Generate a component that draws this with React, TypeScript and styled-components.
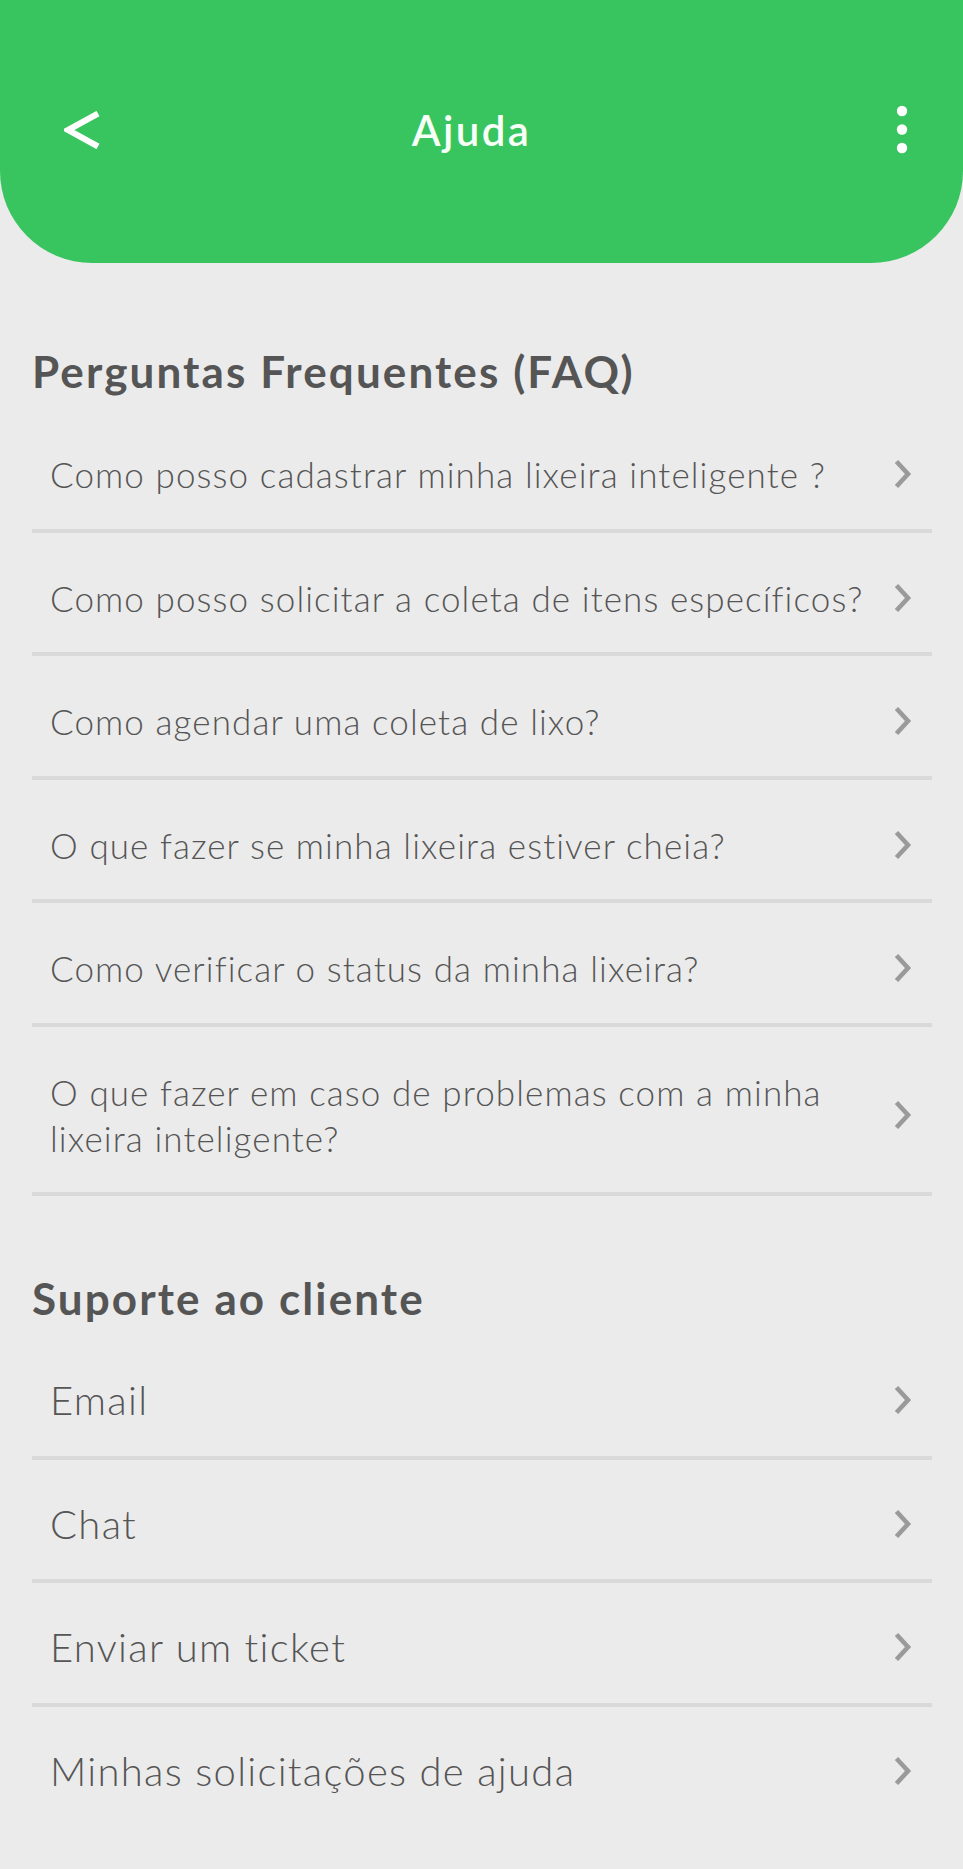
import React from "react";
import styled, { createGlobalStyle } from "styled-components";

const GlobalStyle = createGlobalStyle`
  html, body {
    margin: 0;
    padding: 0;
    background: #ebebeb;
  }
  body {
    font-family: Lato, "Noto Sans", "Liberation Sans", sans-serif;
    -webkit-font-smoothing: antialiased;
  }
  *, *::before, *::after {
    box-sizing: border-box;
  }
`;

const Page = styled.div`
  min-height: 100vh;
  background: #ebebeb;
`;

const Header = styled.header`
  height: 263px;
  background: #38c55f;
  border-radius: 0 0 92px 92px;
  padding: 100px 55px 0 64px;
`;

const Bar = styled.div`
  display: grid;
  grid-template-columns: 36px 1fr 65px;
  align-items: center;
  height: 60px;
`;

const IconButton = styled.button<{ $align: "flex-start" | "flex-end" }>`
  display: flex;
  align-items: center;
  justify-content: ${(p) => p.$align};
  height: 60px;
  padding: 0;
  border: 0;
  background: none;
  cursor: pointer;
`;

const Title = styled.h1`
  margin: 0;
  text-align: center;
  font-size: 42px;
  line-height: 48px;
  font-weight: 600;
  letter-spacing: 2.4px;
  color: #f7fff8;
`;

const Main = styled.main`
  display: flex;
  flex-direction: column;
  gap: 76px;
  padding: 82px 31px 40px 32px;
`;

const Section = styled.section`
  display: flex;
  flex-direction: column;
`;

const SectionTitle = styled.h2`
  margin: 0 0 12px;
  font-size: 44px;
  line-height: 52px;
  font-weight: 700;
  letter-spacing: 2.1px;
  color: #555555;
`;

const List = styled.ul`
  margin: 0;
  padding: 0;
  list-style: none;
`;

type Size = "faq" | "support";

const Row = styled.li<{ $size: Size; $divider: boolean }>`
  display: flex;
  align-items: center;
  gap: 14px;
  padding: ${(p) =>
    p.$size === "faq" ? "42px 20px 31.5px 18px" : "40px 20px 31.5px 18px"};
  border-bottom: ${(p) => (p.$divider ? "4px solid #d9d9d9" : "4px solid transparent")};
  cursor: pointer;
`;

const RowText = styled.span<{ $size: Size }>`
  flex: 1;
  font-size: ${(p) => (p.$size === "faq" ? "35px" : "40px")};
  line-height: ${(p) => (p.$size === "faq" ? "46px" : "48px")};
  letter-spacing: ${(p) => (p.$size === "faq" ? "1.1px" : "1.3px")};
  font-weight: 300;
  color: #555555;
`;

const ChevronBox = styled.span`
  display: flex;
  flex: none;
  width: 19px;
`;

const BackIcon = () => (
  <svg width="36" height="38" viewBox="0 0 36 38" aria-hidden="true">
    <polyline
      points="34,2.5 4,19 34,35.5"
      fill="none"
      stroke="#ffffff"
      strokeWidth="6"
      strokeLinejoin="miter"
    />
  </svg>
);

const KebabIcon = () => (
  <svg width="12" height="50" viewBox="0 0 12 50" aria-hidden="true">
    <circle cx="6" cy="6" r="5.2" fill="#ffffff" />
    <circle cx="6" cy="24.5" r="5.2" fill="#ffffff" />
    <circle cx="6" cy="43" r="5.2" fill="#ffffff" />
  </svg>
);

const Chevron = () => (
  <ChevronBox>
    <svg width="19" height="30" viewBox="0 0 19 30" aria-hidden="true">
      <polyline
        points="3.5,2.5 15,15 3.5,27.5"
        fill="none"
        stroke="#9a9a9a"
        strokeWidth="4.6"
        strokeLinejoin="miter"
      />
    </svg>
  </ChevronBox>
);

const faq = [
  "Como posso cadastrar minha lixeira inteligente ?",
  "Como posso solicitar a coleta de itens específicos?",
  "Como agendar uma coleta de lixo?",
  "O que fazer se minha lixeira estiver cheia?",
  "Como verificar o status da minha lixeira?",
  "O que fazer em caso de problemas com a minha lixeira inteligente?",
];

const support = ["Email", "Chat", "Enviar um ticket", "Minhas solicitações de ajuda"];

export default function App() {
  return (
    <Page>
      <GlobalStyle />
      <Header>
        <Bar>
          <IconButton $align="flex-start" aria-label="Voltar">
            <BackIcon />
          </IconButton>
          <Title>Ajuda</Title>
          <IconButton $align="flex-end" aria-label="Mais opções">
            <KebabIcon />
          </IconButton>
        </Bar>
      </Header>
      <Main>
        <Section>
          <SectionTitle>Perguntas Frequentes (FAQ)</SectionTitle>
          <List>
            {faq.map((q) => (
              <Row key={q} $size="faq" $divider>
                <RowText $size="faq">{q}</RowText>
                <Chevron />
              </Row>
            ))}
          </List>
        </Section>
        <Section>
          <SectionTitle>Suporte ao cliente</SectionTitle>
          <List>
            {support.map((s, i) => (
              <Row key={s} $size="support" $divider={i < support.length - 1}>
                <RowText $size="support">{s}</RowText>
                <Chevron />
              </Row>
            ))}
          </List>
        </Section>
      </Main>
    </Page>
  );
}
